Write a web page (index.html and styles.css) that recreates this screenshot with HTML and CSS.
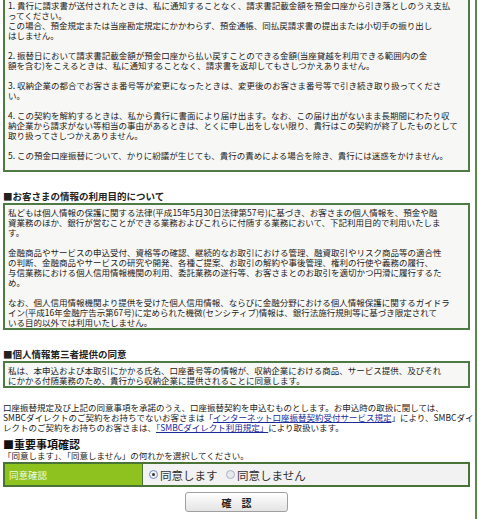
FILE: index.html
```html
<!DOCTYPE html>
<html lang="ja">
<head>
<meta charset="utf-8">
<title>口座振替契約</title>
<link rel="stylesheet" href="styles.css">
</head>
<body>
<div class="page">
  <div class="box box-terms">
    <p>1. 貴行に請求書が送付されたときは、私に通知することなく、請求書記載金額を預金口座から引き落としのうえ支払<br>ってください。<br>この場合、預金規定または当座勘定規定にかかわらず、預金通帳、同払戻請求書の提出または小切手の振り出し<br>はしません。</p>
    <p>2. 振替日において請求書記載金額が預金口座から払い戻すことのできる金額(当座貸越を利用できる範囲内の金<br>額を含む)をこえるときは、私に通知することなく、請求書を返却してもさしつかえありません。</p>
    <p>3. 収納企業の都合でお客さま番号等が変更になったときは、変更後のお客さま番号等で引き続き取り扱ってくださ<br>い。</p>
    <p>4. この契約を解約するときは、私から貴行に書面により届け出ます。なお、この届け出がないまま長期間にわたり収<br>納企業から請求がない等相当の事由があるときは、とくに申し出をしない限り、貴行はこの契約が終了したものとして<br>取り扱ってさしつかえありません。</p>
    <p>5. この預金口座振替について、かりに紛議が生じても、貴行の責めによる場合を除き、貴行には迷惑をかけません。</p>
  </div>

  <h2 class="sec-title first">■お客さまの情報の利用目的について</h2>
  <div class="box">
    <p>私どもは個人情報の保護に関する法律(平成15年5月30日法律第57号)に基づき、お客さまの個人情報を、預金や融<br>資業務のほか、銀行が営むことができる業務およびこれらに付随する業務において、下記利用目的で利用いたしま<br>す。</p>
    <p>金融商品やサービスの申込受付、資格等の確認、継続的なお取引における管理、融資取引やリスク商品等の適合性<br>の判断、金融商品やサービスの研究や開発、各種ご提案、お取引の解約や事後管理、権利の行使や義務の履行、<br>与信業務における個人信用情報機関の利用、委託業務の遂行等、お客さまとのお取引を適切かつ円滑に履行するた<br>め。</p>
    <p>なお、個人信用情報機関より提供を受けた個人信用情報、ならびに金融分野における個人情報保護に関するガイドラ<br>イン(平成16年金融庁告示第67号)に定められた機微(センシティブ)情報は、銀行法施行規則等に基づき限定されて<br>いる目的以外では利用いたしません。</p>
  </div>

  <h2 class="sec-title">■個人情報第三者提供の同意</h2>
  <div class="box">
    <p>私は、本申込および本取引にかかる氏名、口座番号等の情報が、収納企業における商品、サービス提供、及びそれ<br>にかかる付随業務のため、貴行から収納企業に提供されることに同意します。</p>
  </div>

  <p class="note">口座振替規定及び上記の同意事項を承諾のうえ、口座振替契約を申込むものとします。お申込時の取扱に関しては、<br>SMBCダイレクトのご契約をお持ちでないお客さまは「<a href="#">インターネット口座振替契約受付サービス規定</a>」により、SMBCダイ<br>レクトのご契約をお持ちのお客さまは、<a href="#">「SMBCダイレクト利用規定」</a>により取扱います。</p>

  <h2 class="sec-title important">■重要事項確認</h2>
  <p class="instr">「同意します」、「同意しません」の何れかを選択してください。</p>

  <table class="confirm">
    <tr>
      <th>同意確認</th>
      <td>
        <label class="opt"><input type="radio" name="agree" checked>同意します</label>
        <label class="opt"><input type="radio" name="agree">同意しません</label>
      </td>
    </tr>
  </table>

  <div class="actions">
    <button type="button" class="btn">確　認</button>
  </div>
</div>
</body>
</html>
```

FILE: styles.css
```css
html, body {
  margin: 0;
  padding: 0;
  background: #ffffff;
}

body {
  font-family: "Noto Sans CJK JP", "Noto Sans", sans-serif;
  font-size: 8.5px;
  line-height: 10px;
  color: #222222;
}

.page {
  width: 467px;
  margin-top: -5px;
  padding: 0 5px 40px 3px;
  border-right: 2px solid #5b8a4e;
  min-height: 560px;
}

.box {
  border: 2px solid #4e7a44;
  background: #f7f7f5;
  padding: 2px 3px 1px 3px;
  white-space: nowrap;
  overflow: hidden;
}

.box p {
  margin: 0 0 10px 0;
}

.box p:last-child {
  margin-bottom: 0;
}

.box-terms {
  padding: 3px 3px 0 3px;
}

.box-terms p:last-child {
  margin-bottom: 10px;
}

.sec-title {
  font-size: 9.5px;
  line-height: 12px;
  font-weight: bold;
  margin: 18px 0 1px 0;
  color: #222222;
}

.note {
  margin: 14px 0 0 0;
  white-space: nowrap;
}

.note a {
  color: #1a2a9a;
  text-decoration: underline;
}

.sec-title.important {
  font-size: 11px;
  margin: 6px 0 0 0;
  line-height: 12px;
  color: #111111;
}

.instr {
  margin: 0;
}

.confirm {
  width: 100%;
  border-collapse: collapse;
  margin-top: 2px;
  border: 2px solid #4a7435;
}

.confirm th {
  width: 129px;
  height: 21px;
  background: #8dc21f;
  color: #f4fbe0;
  font-weight: normal;
  text-align: left;
  padding: 0 4px;
  border-right: 1px solid #4a7435;
  font-size: 9.5px;
}

.confirm td {
  background: #f2f2f2;
  padding: 0 6px;
  font-size: 11.5px;
  color: #333333;
}

.opt {
  display: inline-flex;
  align-items: center;
  margin-right: 6px;
}

.opt input {
  appearance: none;
  -webkit-appearance: none;
  width: 9px;
  height: 9px;
  margin: 0 2px 0 0;
  border: 1px solid #a8b4c6;
  border-radius: 50%;
  background: #e9e9e9;
  position: relative;
}

.opt input:checked {
  border-color: #6f8fc0;
  background: #f0f0f0;
}

.opt input:checked::after {
  content: "";
  position: absolute;
  left: 2px;
  top: 2px;
  width: 3px;
  height: 3px;
  border-radius: 50%;
  background: #333333;
}

.actions {
  display: flex;
  justify-content: center;
  margin-top: 5px;
}

.btn {
  width: 103px;
  height: 20px;
  font-family: "Noto Sans CJK JP", sans-serif;
  font-size: 10px;
  font-weight: bold;
  color: #222222;
  border: 1px solid #a0a0a0;
  border-radius: 3px;
  background: linear-gradient(#ffffff, #e4e4e4);
  padding: 0;
}
```
